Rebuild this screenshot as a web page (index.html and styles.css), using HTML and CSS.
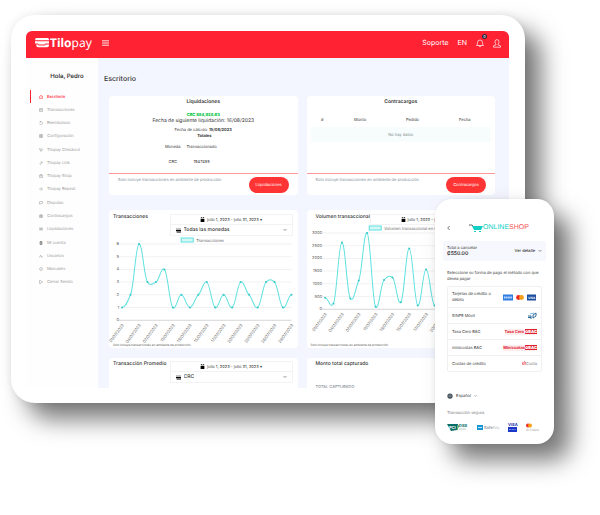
FILE: index.html
```html
<!DOCTYPE html>
<html lang="es">
<head>
    <meta charset="UTF-8">
    <meta name="viewport" content="width=device-width, initial-scale=1.0">
    <title>Tilopay - Escritorio</title>
    <link rel="stylesheet" href="styles.css">
</head>
<body>

    <div class="showcase">
        <div class="tablet">
            <div class="screen">
                <header class="topbar">
                    <svg class="brand-icon" viewBox="0 0 14 10"><path fill="#fff" d="M1.500 0h11q1.500 0 1.500 1.500v.7H0Q.2 0 1.500 0zM0 3.200h14v2.200h-3.500L9.500 6.400H4L3 5.400H0zM1.200 6.600h1.600l1 1h6l1-1H14v1q0 1.600-2 1.600H3Q1 9.200 1.200 6.600z"/></svg>
                    <span class="brand"><b>Tilo</b>pay</span>
                    <button class="menu-btn" aria-label="Menú"><svg viewBox="0 0 8 6"><path d="M0 .5h8M0 3h8M0 5.500h8" stroke="#fff"/></svg></button>
                    <nav class="top-links">
                        <a href="#">Soporte</a>
                        <a href="#">EN</a>
                        <a href="#" class="bell" aria-label="Notificaciones"><svg viewBox="0 0 8 9"><path d="M.5 6.500Q1.500 6 1.500 3.500 1.500 1 4 1t2.500 2.500Q6.500 6 7.500 6.500zM3 7.200Q4 8.800 5 7.200" fill="none" stroke="#fff" stroke-width=".7"/></svg><span class="badge">0</span></a>
                        <a href="#" aria-label="Cuenta"><svg viewBox="0 0 8 9"><path d="M4 .6q2 0 2 2.200Q6 4.500 5 5v.8l2.500 1v1.400H.5V6.800L3 5.800V5Q2 4.500 2 2.800 2 .6 4 .6z" fill="none" stroke="#fff" stroke-width=".7"/></svg></a>
                    </nav>
                </header>

                <div class="layout">
                    <aside class="sidebar">
                        <h2>Hola, Pedro</h2>
                        <nav class="side-menu">
                            <a href="#" class="active"><svg viewBox="0 0 8 8"><path d="M1 7V4a3 3 0 0 1 6 0v3zM4 5l1-2"/></svg>Escritorio</a>
                            <a href="#"><svg viewBox="0 0 8 8"><path d="M1 1h6v6H1zM1 3h6M3 5h2"/></svg>Transacciones</a>
                            <a href="#"><svg viewBox="0 0 8 8"><path d="M2 2a3 3 0 1 1-1 3M2 0v2h2"/></svg>Reembolsos</a>
                            <a href="#"><svg viewBox="0 0 8 8"><path d="M1 1h6v6H1zM3 1v6M5 1v6M1 4h6"/></svg>Configuración</a>
                            <a href="#"><svg viewBox="0 0 8 8"><path d="M0 1h1l1 4h4l1-3H2M2 7h1M5 7h1"/></svg>Tilopay Checkout</a>
                            <a href="#"><svg viewBox="0 0 8 8"><path d="M3 5l3-3M1 5l2 2 2-2M3 3l2-2 2 2-2 2"/></svg>Tilopay Link</a>
                            <a href="#"><svg viewBox="0 0 8 8"><path d="M1 3h6v4H1zM1 3l1-2h4l1 2M3 5h2"/></svg>Tilopay Shop</a>
                            <a href="#"><svg viewBox="0 0 8 8"><path d="M1 4l2-2h3l1 2-1 2H3z"/></svg>Tilopay Repeat</a>
                            <a href="#"><svg viewBox="0 0 8 8"><path d="M1 1h6v4H4L2 7V5H1z"/></svg>Disputas</a>
                            <a href="#"><svg viewBox="0 0 8 8"><path d="M1 2h6v5H1zM1 4h6M3 1v6M5 1v6"/></svg>Contracargos</a>
                            <a href="#"><svg viewBox="0 0 8 8"><path d="M0 2h8v4H0zM3 2v4M5 2v4"/></svg>Liquidaciones</a>
                            <a href="#" class="shop"><svg viewBox="0 0 8 8"><path d="M2 1h4v6H2zM4 1v6M2 4h4"/></svg>Mi cuenta</a>
                            <a href="#"><svg viewBox="0 0 8 8"><path d="M1 7q0-3 2-3t2 3M3 4V2M5 4q2 0 2 3"/></svg>Usuarios</a>
                            <a href="#"><svg viewBox="0 0 8 8"><path d="M4 1a3 3 0 1 0 .1 0M4 3v3"/></svg>Manuales</a>
                            <a href="#"><svg viewBox="0 0 8 8"><path d="M4 1H1v6h3M3 4h4M5 2l2 2-2 2"/></svg>Cerrar Sesión</a>
                        </nav>
                    </aside>

                    <main>
                        <h1>Escritorio</h1>
                        <div class="cards">
                            <section class="card summary">
                                <h3>Liquidaciones</h3>
                                <div class="payout">
                                    <strong class="amount">CRC 884,928.63</strong>
                                    <p class="next">Fecha de siguiente liquidación: 16/08/2023</p>
                                    <p class="calc">Fecha de cálculo: <b>15/08/2023</b></p>
                                    <table class="totals">
                                        <caption>Totales</caption>
                                        <tr><th>Moneda</th><th>Transaccionado</th></tr>
                                        <tr><td>CRC</td><td>1947455</td></tr>
                                    </table>
                                </div>
                                <footer>
                                    <small>Solo incluye transacciones en ambiente de producción</small>
                                    <button class="pill">Liquidaciones</button>
                                </footer>
                            </section>

                            <section class="card summary">
                                <h3>Contracargos</h3>
                                <table class="chargebacks">
                                    <tr><th class="num">#</th><th>Monto</th><th>Pedido</th><th>Fecha</th></tr>
                                    <tr><td colspan="4">No hay datos</td></tr>
                                </table>
                                <footer>
                                    <small>Solo incluye transacciones en ambiente de producción</small>
                                    <button class="pill">Contracargos</button>
                                </footer>
                            </section>

                            <section class="card chart-card">
                                <div class="card-head">
                                    <h4>Transacciones</h4>
                                    <div class="filters">
                                        <button class="date-btn"><svg viewBox="0 0 8 8"><path d="M1 1h1V0h1v1h2V0h1v1h1v1H1zM1 3h6v5H1z"/></svg>julio 1, 2023 - julio 31, 2023 ▾</button>
                                        <label class="currency"><svg viewBox="0 0 8 8"><path d="M0 1h8v1H0zM0 3h8v2H0zM1 6h7v1H1z"/></svg><select aria-label="Moneda"><option>Todas las monedas</option></select><svg class="caret" viewBox="0 0 8 8"><path d="M1 2l3 3 3-3"/></svg></label>
                                    </div>
                                </div>
                                <svg class="chart" id="chart-count" viewBox="0 0 188 106"></svg>
                                <small>Solo incluye transacciones en ambiente de producción</small>
                            </section>

                            <section class="card chart-card">
                                <div class="card-head">
                                    <h4>Volumen transaccional</h4>
                                    <div class="filters">
                                        <button class="date-btn"><svg viewBox="0 0 8 8"><path d="M1 1h1V0h1v1h2V0h1v1h1v1H1zM1 3h6v5H1z"/></svg>julio 1, 2023 - julio 31, 2023 ▾</button>
                                    </div>
                                </div>
                                <svg class="chart" id="chart-volume" viewBox="0 0 188 118"></svg>
                                <small>Solo incluye transacciones en ambiente de producción</small>
                            </section>

                            <section class="card peek">
                                <div class="card-head">
                                    <h4>Transacción Promedio</h4>
                                    <div class="filters">
                                        <button class="date-btn"><svg viewBox="0 0 8 8"><path d="M1 1h1V0h1v1h2V0h1v1h1v1H1zM1 3h6v5H1z"/></svg>julio 1, 2023 - julio 31, 2023 ▾</button>
                                        <label class="currency"><svg viewBox="0 0 8 8"><path d="M0 1h8v1H0zM0 3h8v2H0zM1 6h7v1H1z"/></svg><select aria-label="Moneda"><option>CRC</option></select><svg class="caret" viewBox="0 0 8 8"><path d="M1 2l3 3 3-3"/></svg></label>
                                    </div>
                                </div>
                            </section>

                            <section class="card peek">
                                <div class="card-head"><h4>Monto total capturado</h4></div>
                                <p class="captured">TOTAL CAPTURADO</p>
                            </section>
                        </div>
                    </main>
                </div>
            </div>
        </div>

        <div class="phone">
            <div class="shop-head">
                <a href="#" aria-label="Volver"><svg class="back" viewBox="0 0 6 8"><path d="M4 1L1 4l3 3"/></svg></a>
                <svg class="cart" viewBox="0 0 14 9"><path d="M0 1h3l1 1" fill="none" stroke="#666"/><path d="M3 2h11l-2 4H5zM5 7h2v1H5zM10 7h2v1h-2z" fill="#12cfc6"/></svg>
                <span class="shop-name">ONLINE<em>SHOP</em></span>
            </div>
            <div class="total">
                <div>Total a cancelar<b>₡550.00</b></div>
                <button>Ver detalle <svg viewBox="0 0 8 8"><path d="M1 2l3 3 3-3"/></svg></button>
            </div>
            <p class="hint">Seleccione su forma de pago el método con que desea pagar</p>
            <ul class="methods">
                <li><span>Tarjetas de crédito o débito</span>
                    <svg class="cards-logo" viewBox="0 0 34 7"><rect width="10" height="6" y=".5" fill="#2f7de0"/><path d="M1 3.500h8" stroke="#cfe3ff" stroke-width="2" stroke-dasharray="1.500 .6"/><circle cx="15.500" cy="3.500" r="2.400" fill="#eb2a24"/><circle cx="18.500" cy="3.500" r="2.400" fill="#f79e1b"/><rect x="24" y=".5" width="9" height="6" fill="#1c4ea0"/><text x="25" y="5" font-size="3" font-weight="bold" fill="#fff">VISA</text></svg></li>
                <li><span>SINPE Móvil</span>
                    <svg class="sinpe" viewBox="0 0 10 8"><path d="M1 4h3v3M1 5.500h3M6 6V3l3-2v3z" fill="none" stroke="#2c6c9c"/><path d="M3 2l4-1" stroke="#7bb6d9"/></svg></li>
                <li><span>Tasa Cero BAC</span><span class="bac">Tasa Cero <b>✿BAC</b></span></li>
                <li><span>minicuotas BAC</span><span class="bac">Minicuotas<b>✿BAC</b></span></li>
                <li><span>Cuotas de crédito</span><span class="cuota"><svg viewBox="0 0 4 4"><path d="M0 4L1 1M1.500 4l1-4M3 4l.5-3"/></svg>Cuota</span></li>
            </ul>
            <button class="lang"><svg viewBox="0 0 8 8"><circle cx="4" cy="4" r="3.500" fill="#33424d"/><path d="M1 3h6M1 5h6M4 1v6" stroke="#b8c1c8" stroke-width=".5"/></svg>Español <svg class="tiny" viewBox="0 0 8 8"><path d="M1 2l3 3 3-3"/></svg></button>
            <p class="secure">Transacción segura</p>
            <div class="seals">
                <svg viewBox="0 0 22 9"><path d="M0 1h11l-1 6-6 1z" fill="#0a6e68"/><text x="2" y="6" font-size="4" font-weight="bold" fill="#fff">PCI</text><path d="M10 7l2-5" stroke="#3cae53"/><text x="12" y="4" font-size="4" font-weight="bold" fill="#0a6e68">DSS</text><path d="M12 6h7" stroke="#8ba5a0" stroke-width=".6"/></svg>
                <svg viewBox="0 0 22 9"><rect y="2" width="6" height="5" fill="#1697d4"/><path d="M1 4.500h4" stroke="#bfe6f8"/><text x="7" y="6" font-size="4" fill="#627080">Safe<tspan fill="#b5bcc2">Key</tspan></text></svg>
                <svg class="narrow" viewBox="0 0 10 9"><text x="0" y="3" font-size="4" font-weight="bold" fill="#1b37a8">VISA</text><rect y="4" width="9" height="5" fill="#1b37c8"/><path d="M1 6.500h7" stroke="#8093e8" stroke-dasharray="1 .4"/></svg>
                <svg class="narrow" viewBox="0 0 10 9"><circle cx="2" cy="2.500" r="2" fill="#eb2a24"/><circle cx="4" cy="2.500" r="2" fill="#f79e1b"/><text x="0" y="8" font-size="3" fill="#999">ID Check</text></svg>
            </div>
        </div>
    </div>

    <script src="charts.js"></script>
</body>
</html>
```
FILE: styles.css
```css
* {
    box-sizing: border-box;
}
body {
    margin: 0;
    padding: 15px 46px 112px 11px;
    background-color: #fff;
    color: #333;
    font-family: Inter, "Open Sans", sans-serif;
    font-size: 4px;
    line-height: 6px;
    text-rendering: geometricPrecision;
}
h1, h2, h3, h4, p, ul {
    margin: 0;
    padding: 0;
}
a {
    color: inherit;
    text-decoration: none;
}
button, select {
    font: inherit;
    color: inherit;
    border: none;
    background: none;
    padding: 0;
    cursor: pointer;
    text-rendering: inherit;
}
small {
    font-size: 4px;
    color: #7b8d95;
    white-space: nowrap;
}
.showcase {
    position: relative;
}
.tablet {
    margin-right: 29px;
    padding: 16px 16px 15px 15px;
    background-color: #fff;
    border-radius: 24px;
    box-shadow: 16px 16px 24px rgba(0, 0, 0, 0.54), 0 0 8px rgba(0, 0, 0, 0.08);
}
.screen {
    overflow: hidden;
    border-radius: 6px 6px 0 0;
}

/* Top bar */
.topbar {
    display: flex;
    align-items: center;
    height: 27px;
    padding: 0 8px 3px 9px;
    background-color: #ff2233;
    color: #fff;
}
.brand-icon {
    width: 14px;
    height: 10px;
}
.brand {
    margin-left: 1px;
    font-family: "Noto Sans", sans-serif;
    font-size: 12px;
    line-height: 12px;
}
.menu-btn {
    margin-left: 10px;
    height: 6px;
}
.menu-btn svg {
    display: block;
    width: 7px;
    height: 6px;
}
.top-links {
    display: flex;
    align-items: center;
    gap: 9px;
    margin-left: auto;
    font-size: 7px;
    line-height: 10px;
}
.top-links svg {
    display: block;
    width: 8px;
    height: 9px;
}
.bell {
    position: relative;
}
.badge {
    position: absolute;
    top: -5px;
    right: -3px;
    width: 5px;
    height: 5px;
    border-radius: 50%;
    background-color: #27233a;
    font-size: 4px;
    line-height: 5px;
    text-align: center;
}

/* Sidebar */
.layout {
    display: flex;
}
.sidebar {
    flex: 0 0 72px;
    padding-top: 15px;
    background-color: #fefefe;
}
.sidebar h2 {
    margin-left: 10px;
    font-size: 6px;
    line-height: 8px;
    font-weight: 600;
    text-align: center;
}
.side-menu {
    display: grid;
    grid-auto-rows: 1fr;
    height: 199px;
    margin: 9px 0 0 4px;
    color: #999;
}
.side-menu a {
    display: flex;
    align-items: center;
    gap: 4px;
    padding-left: 8px;
    border-left: 1px solid transparent;
}
.side-menu svg {
    width: 4px;
    height: 4px;
    fill: none;
    stroke: currentColor;
}
.side-menu .active {
    color: #ff2233;
    border-color: #ff2233;
    font-weight: 500;
}
.side-menu .shop svg {
    stroke: #555;
}

/* Main */
main {
    flex: 1;
    min-width: 0;
    padding: 16px 14px 0 11px;
    background-color: #f3f6fe;
}
h1 {
    margin-left: -5px;
    font-size: 7px;
    line-height: 10px;
    font-weight: 500;
}
.cards {
    display: grid;
    grid-template-columns: 1fr 1fr;
    column-gap: 9px;
    margin-top: 12px;
}
.card {
    min-width: 0;
    overflow: hidden;
    background-color: #fff;
    border-radius: 4px;
}
.summary {
    display: flex;
    flex-direction: column;
    height: 99px;
    margin-bottom: 15px;
    padding-top: 3px;
}
.summary h3 {
    font-size: 5px;
    line-height: 6px;
    font-weight: 600;
    text-align: center;
}
.summary footer {
    display: flex;
    align-items: flex-start;
    justify-content: space-between;
    height: 22px;
    margin-top: auto;
    padding: 3px 9px;
    border-top: 1px solid #ff9999;
}
.pill {
    height: 16px;
    width: 40px;
    border-radius: 8px;
    background-color: #ff3535;
    color: #fff;
}
.payout {
    padding-top: 7px;
    text-align: center;
}
.amount {
    display: block;
    color: #00c53c;
    font-weight: 800;
}
.next {
    font-size: 5px;
}
.calc {
    margin-top: 3px;
}
.totals {
    margin: 0 0 0 53px;
    border-collapse: collapse;
}
.totals caption {
    padding-left: 27px;
    font-weight: bold;
}
th {
    font-weight: normal;
}
.totals th, .totals td {
    height: 15px;
    padding: 0 3px;
}
.chargebacks {
    table-layout: fixed;
    width: calc(100% - 8px);
    margin: 7px 4px 0;
    border-collapse: collapse;
    text-align: center;
}
.chargebacks .num {
    width: 13%;
}
.chargebacks th, .chargebacks td {
    height: 15px;
    padding: 0;
}
.chargebacks td {
    background-color: #f7fdfd;
    color: #75868b;
}

/* Chart cards */
.chart-card {
    display: flex;
    flex-direction: column;
    height: 138px;
    margin-bottom: 10px;
}
.chart-card small {
    height: 6px;
    margin-top: -2px;
    padding-left: 4px;
    color: #555;
    font-size: 3px;
}
.card-head {
    display: flex;
    justify-content: space-between;
    padding: 4px 5px 0 4px;
}
.card:nth-child(even) .card-head {
    padding-left: 9px;
}
h4 {
    font-size: 5px;
    line-height: 6px;
    font-weight: 500;
    white-space: nowrap;
}
.filters {
    flex: 0 0 123px;
}
.date-btn, .currency {
    display: flex;
    align-items: center;
    width: 100%;
    height: 11px;
    border: 1px solid #f3f3f5;
}
.date-btn {
    justify-content: center;
    gap: 2px;
}
.date-btn svg, .currency svg {
    width: 5px;
    height: 5px;
}
.currency {
    gap: 3px;
    padding: 0 5px;
    border-top: none;
    font-size: 5px;
    font-weight: 500;
}
.currency select {
    flex: 1;
    appearance: none;
}
svg.caret, .total svg, .tiny, .back {
    width: 4px;
    height: 4px;
    fill: none;
    stroke: #333;
}
.chart-card .card-head {
    height: 10px;
}
.chart {
    display: block;
    width: 100%;
    margin-top: auto;
    overflow: visible;
    font-size: 4px;
    fill: #666;
}
.chart .grid {
    stroke: #f1f1f1;
    stroke-width: 1;
}
.chart .axis {
    stroke: #d5d5d5;
}
.chart .curve {
    fill: none;
    stroke: #5fe0e0;
}
.chart .dot {
    fill: #38c8c8;
}
.chart .key {
    fill: #d5f8f7;
    stroke: #5fe0e0;
    stroke-width: 1;
}
.peek {
    height: 30px;
    border-radius: 4px 4px 0 0;
}
.peek .card-head {
    padding-top: 3px;
}
.captured {
    margin: 17px 0 0 9px;
    color: #75808a;
}

/* Phone */
.phone {
    position: absolute;
    top: 184px;
    right: 0;
    width: 119px;
    padding: 22px 8px 12px;
    background-color: #fff;
    border-radius: 17px;
    box-shadow: 16px 16px 24px rgba(0, 0, 0, 0.54), 0 0 4px rgba(0, 0, 0, 0.06);
}
.shop-head {
    display: flex;
    align-items: center;
    height: 14px;
    padding-left: 4px;
}
.back {
    display: block;
    width: 4px;
    height: 6px;
}
.cart {
    width: 14px;
    height: 9px;
    margin-left: 18px;
}
.shop-name {
    font-family: "Liberation Sans Narrow", "Liberation Sans", sans-serif;
    font-size: 7px;
    line-height: 10px;
    color: #12cfc6;
}
.shop-name em {
    font-style: normal;
    color: #f55555;
}
.total {
    display: flex;
    align-items: center;
    justify-content: space-between;
    height: 20px;
    margin-top: 6px;
    padding: 0 4px;
    background-color: #f7f8fd;
    border-radius: 2px;
}
.total b {
    display: block;
    font-size: 5px;
    font-weight: 600;
}
.total button {
    display: flex;
    align-items: center;
    gap: 3px;
    font-weight: 500;
}
.hint {
    margin: 9px 4px 4px;
}
.methods {
    margin: 0 4px;
    border: 1px solid #f0f0f3;
    border-radius: 2px;
    list-style: none;
}
.methods li {
    display: flex;
    align-items: center;
    justify-content: space-between;
    height: 16px;
    padding: 0 4px;
}
.methods li:first-child {
    height: 20px;
}
.methods li:first-child span {
    width: 42px;
}
.methods li + li {
    border-top: 1px solid #f0f0f3;
}
.cards-logo {
    width: 34px;
    height: 7px;
}
.sinpe {
    width: 10px;
    height: 8px;
}
.bac {
    color: #e0202f;
    font-weight: bold;
    background-color: #fdeeee;
}
.bac b {
    background-color: #e0202f;
    color: #fff;
}
.cuota {
    color: #777;
}
.cuota svg {
    width: 4px;
    height: 4px;
    stroke: #e0202f;
    stroke-width: .6;
}
.lang {
    display: flex;
    align-items: center;
    gap: 3px;
    margin: 21px 4px 0;
}
.lang svg {
    width: 6px;
    height: 6px;
}
.lang .tiny {
    width: 3px;
}
.secure {
    margin: 11px 4px 0;
    color: #777;
}
.seals {
    display: flex;
    justify-content: space-between;
    margin: 7px 10px 0 4px;
}
.seals svg {
    width: 22px;
    height: 9px;
    overflow: visible;
}
.seals .narrow {
    width: 10px;
}
```
FILE: charts.js
```javascript
const days = ['01', '04', '07', '11', '13', '15', '17', '20', '22', '26', '29'];

function drawChart(id, opt) {
    const bottom = opt.top + 76;
    const step = (opt.right - opt.left) / 20;
    const px = i => opt.left + i * step;
    const py = v => bottom - v / opt.max * 76;
    let out = '';

    // legend
    out += `<rect class="key" x="${opt.keyX}" y="${opt.keyY}" width="12" height="4"/>`;
    out += `<text x="${opt.keyX + 15}" y="${opt.keyY + 4}">${opt.label}</text>`;

    // horizontal grid and scale
    for (let v = 0; v <= opt.max; v += opt.tick) {
        out += `<path class="${v ? 'grid' : 'axis'}" d="M${opt.left - 3} ${py(v)}H${opt.right}"/>`;
        out += `<text x="${opt.left - 3}" y="${py(v) + 1}" text-anchor="end">${v}</text>`;
    }

    // dates
    days.forEach((d, i) => {
        const x = px(i * 2) + 2;
        const y = bottom + 5;
        out += `<text transform="translate(${x} ${y}) rotate(-54)" text-anchor="end">${d}/07/2023</text>`;
    });

    // smooth curve through the points
    const p = opt.data.map((v, i) => [px(i), py(v)]);
    const slope = p.map((q, i) => {
        if (i === 0 || i === p.length - 1) return 0;
        return (p[i + 1][1] - p[i - 1][1]) / 2 * 0.6;
    });
    let d = `M${p[0]}`;
    for (let i = 1; i < p.length; i++) {
        d += `C${p[i - 1][0] + step / 2.5} ${p[i - 1][1] + slope[i - 1] / 2.5} ${p[i][0] - step / 2.5} ${p[i][1] - slope[i] / 2.5} ${p[i]}`;
    }
    out += `<path class="curve" d="${d}"/>`;
    p.forEach(q => {
        out += `<circle class="dot" cx="${q[0]}" cy="${q[1]}" r="1"/>`;
    });
    document.getElementById(id).innerHTML = out;
}

drawChart('chart-count', {
    left: 13, right: 182, top: 6, max: 6, tick: 1, keyX: 72, keyY: 0, label: 'Transacciones',
    data: [1, 2, 6, 3, 3, 4, 1, 2, 1, 2, 3, 1, 2, 1, 3, 2, 1, 3, 3, 1, 2]
});
drawChart('chart-volume', {
    left: 18, right: 186, top: 7, max: 3000, tick: 500, keyX: 62, keyY: 0, label: 'Volumen transaccional en USD',
    data: [450, 230, 2630, 420, 1130, 3000, 100, 1150, 1250, 270, 2390, 150, 1560, 150, 900, 1400, 300, 1100, 800, 400, 600]
});
```
